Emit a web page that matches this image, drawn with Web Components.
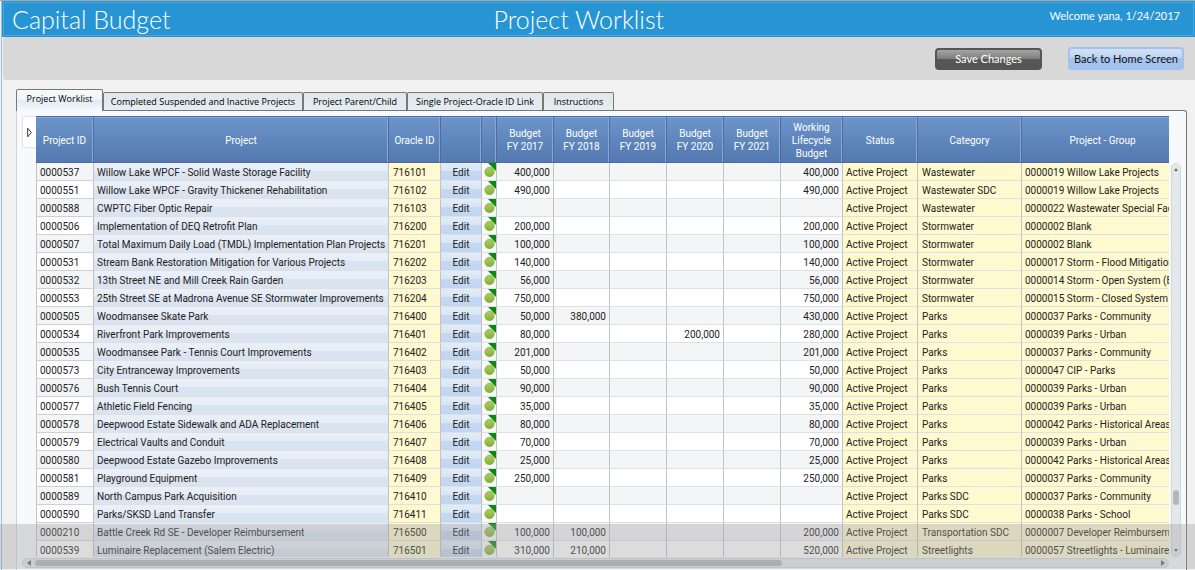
<!DOCTYPE html>
<html lang="en">
<head>
<meta charset="utf-8">
<title>Capital Budget - Project Worklist</title>
<style>
  body {
    margin: 0;
    background: #f1f1f1;
    font-family: Roboto, "Open Sans", sans-serif;
    font-size: 10px;
    color: #222;
  }
</style>
</head>
<body>
<budget-application>
  <page-header slot="header">
    <span slot="product">Capital Budget</span>
    <span slot="title">Project Worklist</span>
    <span slot="welcome">Welcome yana, 1/24/2017</span>
  </page-header>
  <page-toolbar slot="toolbar">
    <glossy-button variant="dark">Save Changes</glossy-button>
    <glossy-button>Back to Home Screen</glossy-button>
  </page-toolbar>
  <tab-strip slot="tabs"></tab-strip>
  <project-grid></project-grid>
</budget-application>

<script>
/**
 * The page frame: header, toolbar and the tabbed panel.
 */
const applicationTemplate = document.createElement('template')
applicationTemplate.innerHTML = `
  <style>
    :host {
      display: flex;
      flex-direction: column;
      box-sizing: border-box;
      height: 100vh;
      overflow: hidden;
      position: relative;
      border-top: 1px solid #a8a8a8;
    }

    .frame {
      flex: 1;
      min-height: 0;
      display: flex;
      flex-direction: column;
      margin-left: 1px;
      border-left: 1px solid #9dbde8;
    }

    .content {
      flex: 1;
      min-height: 0;
      display: flex;
      flex-direction: column;
      padding: 9px 8px 0 14px;
    }

    .panel {
      flex: 1;
      min-height: 0;
      display: flex;
      box-sizing: border-box;
      padding: 5px 5px 0;
      background: #f6fafd;
      border: solid #777;
      border-width: 1px 1px 0 1px;
      border-left-color: #d0d3d6;
      border-top-right-radius: 3px;
    }

    /* Translucent strip over the bottom of the page */
    .shade {
      position: absolute;
      left: 0;
      right: 0;
      bottom: 1px;
      height: 45px;
      background: rgba(158, 158, 158, 0.36);
      pointer-events: none;
    }
  </style>
  <div class="frame">
    <slot name="header"></slot>
    <slot name="toolbar"></slot>
    <div class="content">
      <slot name="tabs"></slot>
      <div class="panel"><slot></slot></div>
    </div>
  </div>
  <div class="shade"></div>
`
customElements.define('budget-application',
  /**
   * Represents a budget-application element.
   */
  class extends HTMLElement {
    constructor () {
      super()
      this.attachShadow({ mode: 'open' }).appendChild(applicationTemplate.content.cloneNode(true))
    }
  }
)

const headerTemplate = document.createElement('template')
headerTemplate.innerHTML = `
  <style>
    :host {
      display: block;
      padding: 1px;
      background: #2794d4;
      color: #fff;
      font-family: Lato, "Open Sans", sans-serif;
    }

    header {
      display: grid;
      grid-template-columns: 14fr auto 15fr;
      align-items: center;
      box-sizing: border-box;
      height: 34px;
      padding: 0 13px 0 8px;
      border: 1px solid #4ba6dc;
    }

    h1, h2 {
      margin: 0;
      font-size: 25px;
      line-height: 30px;
      font-weight: 300;
      white-space: nowrap;
    }

    p {
      margin: 0 0 6px;
      font-size: 11px;
      line-height: 14px;
      text-align: right;
    }
  </style>
  <header>
    <h1><slot name="product"></slot></h1>
    <h2><slot name="title"></slot></h2>
    <p><slot name="welcome"></slot></p>
  </header>
`
customElements.define('page-header',
  /**
   * Represents a page-header element.
   */
  class extends HTMLElement {
    constructor () {
      super()
      this.attachShadow({ mode: 'open' }).appendChild(headerTemplate.content.cloneNode(true))
    }
  }
)

const toolbarTemplate = document.createElement('template')
toolbarTemplate.innerHTML = `
  <style>
    :host {
      display: flex;
      justify-content: flex-end;
      align-items: center;
      gap: 26px;
      height: 43px;
      margin-left: 1px;
      padding-right: 11px;
      background: #d8d8d8;
      border-radius: 3px 0 0 3px;
    }
  </style>
  <slot></slot>
`
customElements.define('page-toolbar',
  /**
   * Represents a page-toolbar element.
   */
  class extends HTMLElement {
    constructor () {
      super()
      this.attachShadow({ mode: 'open' }).appendChild(toolbarTemplate.content.cloneNode(true))
    }
  }
)

const buttonTemplate = document.createElement('template')
buttonTemplate.innerHTML = `
  <style>
    :host {
      display: block;
    }

    button {
      display: block;
      width: 116px;
      height: 23px;
      padding: 0;
      border: 2px solid #a3c1ee;
      border-radius: 4px;
      background: linear-gradient(#d3e1f7, #bfd3f3 45%, #a6c4ef 50%, #a3c1ee);
      color: #111;
      font: 11px/16px Lato, "Open Sans", sans-serif;
      white-space: nowrap;
    }

    :host([variant="dark"]) button {
      width: 107px;
      height: 22px;
      padding-top: 1px;
      border: 2px solid #555;
      background: linear-gradient(#a5a5a5, #7e7e7e 48%, #585858 50%, #545454);
      color: #fff;
    }
  </style>
  <button type="button"><slot></slot></button>
`
customElements.define('glossy-button',
  /**
   * Represents a glossy-button element.
   */
  class extends HTMLElement {
    constructor () {
      super()
      this.attachShadow({ mode: 'open' }).appendChild(buttonTemplate.content.cloneNode(true))
    }
  }
)

const tabTemplate = document.createElement('template')
tabTemplate.innerHTML = `
  <style>
    :host {
      display: flex;
      align-items: flex-end;
      height: 21px;
      font-family: "Open Sans", "Noto Sans", sans-serif;
      font-size: 9px;
    }

    button {
      box-sizing: border-box;
      height: 18px;
      padding: 0;
      border: 1px solid #777;
      border-bottom: 0;
      border-radius: 2px 2px 0 0;
      background: linear-gradient(#dfe7ec, #e4edf0);
      color: #000;
      font: inherit;
      line-height: 16px;
      white-space: nowrap;
    }

    /* The open tab covers the top line of the panel */
    button[aria-selected="true"] {
      position: relative;
      height: 22px;
      margin-bottom: -1px;
      padding-bottom: 4px;
      background: linear-gradient(#f5f9fb, #eef5f9 48%, #dfebf1 50%, #f6fafd);
    }
  </style>
`
customElements.define('tab-strip',
  /**
   * Represents a tab-strip element.
   */
  class extends HTMLElement {
    #tabs = [
      ['Project Worklist', 87],
      ['Completed Suspended and Inactive Projects', 200],
      ['Project Parent/Child', 104],
      ['Single Project-Oracle ID Link', 136],
      ['Instructions', 71]
    ]

    constructor () {
      super()
      this.attachShadow({ mode: 'open' }).appendChild(tabTemplate.content.cloneNode(true))
      this.setAttribute('role', 'tablist')

      this.#tabs.forEach(([label, width], index) => {
        const button = document.createElement('button')
        button.type = 'button'
        button.setAttribute('role', 'tab')
        button.setAttribute('aria-selected', index === 0)
        button.style.width = `${width}px`
        button.textContent = label
        this.shadowRoot.appendChild(button)
      })
    }
  }
)

const scrollTemplate = document.createElement('template')
scrollTemplate.innerHTML = `
  <style>
    :host {
      display: flex;
      flex-direction: column;
      align-items: center;
      box-sizing: border-box;
      width: 10px;
      border: 1px solid #d3d8db;
      border-radius: 5px;
      background: #e4e8ea;
    }

    :host([horizontal]) {
      flex-direction: row;
      width: auto;
      height: 10px;
    }

    svg {
      flex: none;
      width: 8px;
      height: 12px;
      fill: #666;
    }

    :host([horizontal]) svg {
      width: 12px;
      height: 8px;
    }

    .before { flex: var(--before, 0); }
    .after { flex: var(--after, 1); }

    .thumb {
      flex: var(--thumb, 0 0 15px);
      width: 6px;
      border-radius: 3px;
      background: #b4b7b9;
    }

    :host([horizontal]) .thumb {
      width: auto;
      height: 6px;
    }
  </style>
  <svg viewBox="0 0 8 12"><path class="start"/></svg>
  <div class="before"></div>
  <div class="thumb"></div>
  <div class="after"></div>
  <svg viewBox="0 0 8 12"><path class="end"/></svg>
`
customElements.define('scroll-track',
  /**
   * Represents a scroll-track element.
   */
  class extends HTMLElement {
    constructor () {
      super()
      this.attachShadow({ mode: 'open' }).appendChild(scrollTemplate.content.cloneNode(true))

      const horizontal = this.hasAttribute('horizontal')
      this.shadowRoot.querySelector('.start').setAttribute('d', horizontal ? 'M8 1v6L4 4z' : 'M2 7h4L4 4z')
      this.shadowRoot.querySelector('.end').setAttribute('d', horizontal ? 'M5 1v6l4-3z' : 'M2 5h4L4 8z')
      if (horizontal) {
        this.shadowRoot.querySelectorAll('svg').forEach(svg => svg.setAttribute('viewBox', '0 0 12 8'))
      }
    }
  }
)

// id, project, oracle id, FY 2017, FY 2018, FY 2020, lifecycle, category, group
const projects = [
  ['0000537', 'Willow Lake WPCF - Solid Waste Storage Facility', '716101', '400,000', '', '', '400,000', 'Wastewater', '0000019 Willow Lake Projects'],
  ['0000551', 'Willow Lake WPCF - Gravity Thickener Rehabilitation', '716102', '490,000', '', '', '490,000', 'Wastewater SDC', '0000019 Willow Lake Projects'],
  ['0000588', 'CWPTC Fiber Optic Repair', '716103', '', '', '', '', 'Wastewater', '0000022 Wastewater Special Faci'],
  ['0000506', 'Implementation of DEQ Retrofit Plan', '716200', '200,000', '', '', '200,000', 'Stormwater', '0000002 Blank'],
  ['0000507', 'Total Maximum Daily Load (TMDL) Implementation Plan Projects', '716201', '100,000', '', '', '100,000', 'Stormwater', '0000002 Blank'],
  ['0000531', 'Stream Bank Restoration Mitigation for Various Projects', '716202', '140,000', '', '', '140,000', 'Stormwater', '0000017 Storm - Flood Mitigation'],
  ['0000532', '13th Street NE and Mill Creek Rain Garden', '716203', '56,000', '', '', '56,000', 'Stormwater', '0000014 Storm - Open System (B'],
  ['0000553', '25th Street SE at Madrona Avenue SE Stormwater Improvements', '716204', '750,000', '', '', '750,000', 'Stormwater', '0000015 Storm - Closed System ('],
  ['0000505', 'Woodmansee Skate Park', '716400', '50,000', '380,000', '', '430,000', 'Parks', '0000037 Parks - Community'],
  ['0000534', 'Riverfront Park Improvements', '716401', '80,000', '', '200,000', '280,000', 'Parks', '0000039 Parks - Urban'],
  ['0000535', 'Woodmansee Park - Tennis Court Improvements', '716402', '201,000', '', '', '201,000', 'Parks', '0000037 Parks - Community'],
  ['0000573', 'City Entranceway Improvements', '716403', '50,000', '', '', '50,000', 'Parks', '0000047 CIP - Parks'],
  ['0000576', 'Bush Tennis Court', '716404', '90,000', '', '', '90,000', 'Parks', '0000039 Parks - Urban'],
  ['0000577', 'Athletic Field Fencing', '716405', '35,000', '', '', '35,000', 'Parks', '0000039 Parks - Urban'],
  ['0000578', 'Deepwood Estate Sidewalk and ADA Replacement', '716406', '80,000', '', '', '80,000', 'Parks', '0000042 Parks - Historical Areas ('],
  ['0000579', 'Electrical Vaults and Conduit', '716407', '70,000', '', '', '70,000', 'Parks', '0000039 Parks - Urban'],
  ['0000580', 'Deepwood Estate Gazebo Improvements', '716408', '25,000', '', '', '25,000', 'Parks', '0000042 Parks - Historical Areas ('],
  ['0000581', 'Playground Equipment', '716409', '250,000', '', '', '250,000', 'Parks', '0000037 Parks - Community'],
  ['0000589', 'North Campus Park Acquisition', '716410', '', '', '', '', 'Parks SDC', '0000037 Parks - Community'],
  ['0000590', 'Parks/SKSD Land Transfer', '716411', '', '', '', '', 'Parks SDC', '0000038 Parks - School'],
  ['0000210', 'Battle Creek Rd SE - Developer Reimbursement', '716500', '100,000', '100,000', '', '200,000', 'Transportation SDC', '0000007 Developer Reimbursem.'],
  ['0000539', 'Luminaire Replacement (Salem Electric)', '716501', '310,000', '210,000', '', '520,000', 'Streetlights', '0000057 Streetlights - Luminaire.']
]

const gridTemplate = document.createElement('template')
gridTemplate.innerHTML = `
  <style>
    :host {
      flex: 1;
      min-width: 0;
      display: grid;
      grid-template-columns: 14px minmax(0, 1fr) 10px;
      grid-template-rows: minmax(0, 1fr) 10px;
      padding-bottom: 2px;
    }

    .expander {
      width: 14px;
      height: 32px;
      box-sizing: border-box;
      padding: 0;
      border: 1px solid #e2e4e6;
      border-right: 0;
      background: #fff;
    }

    .expander svg {
      display: block;
      margin: auto;
    }

    .viewport {
      overflow: hidden;
      margin-right: 2px;
      margin-bottom: 1px;
    }

    scroll-track.vertical {
      margin: 47px 0 1px;
      --before: 8;
    }

    scroll-track.horizontal {
      grid-column: 1 / 3;
      margin-right: 2px;
      --thumb: 2;
    }

    /* The last column runs on past the right edge of the viewport */
    table {
      table-layout: fixed;
      width: calc(100% + 14px);
      border-collapse: separate;
      border-spacing: 0;
    }

    th, td {
      box-sizing: border-box;
      padding: 0 4px;
      white-space: nowrap;
      overflow: hidden;
      border-right: 1px solid #c2c3c6;
    }

    th {
      height: 47px;
      padding: 1px 0 0;
      border: solid #54699f;
      border-width: 1px 1px 1px 0;
      background: linear-gradient(#6c95ca, #5379b0);
      box-shadow: inset -1px 1px #86a8d8;
      color: #fff;
      font-weight: normal;
      line-height: 13px;
      white-space: pre-line;
    }

    th:last-child, td:last-child {
      border-right: 0;
    }

    td {
      height: 18px;
      padding-top: 2px;
      line-height: 15px;
      border-bottom: 1px solid #dfe0e4;
      background: #fff;
    }

    tr:nth-child(odd) td {
      background: #f4f5f7;
    }

    td:first-child {
      padding-left: 3px;
      border-left: 1px solid #c2c3c6;
      border-bottom-color: #cfd0d3;
    }

    tr td.project {
      padding-left: 3px;
      background: linear-gradient(#ebf0f8, #e6edf6 45%, #dae4f1 50%, #dae3f0);
    }

    tr td.yellow {
      background: #fff9cf;
    }

    td.number {
      padding-right: 3px;
      text-align: right;
    }

    td.status {
      padding: 2px 0 0 3px;
    }

    td.group {
      padding-left: 3px;
    }

    td.action, td.lights {
      padding: 0;
    }

    td.action button {
      display: block;
      width: 100%;
      height: 17px;
      padding: 2px 0 0;
      border: 0;
      background: linear-gradient(#e3ecf8, #d8e5f5 45%, #c5d8f1 50%, #c3d6f0);
      color: #222;
      font: inherit;
    }

    tr td.lights {
      background: #f8f9fa;
    }

    td.lights svg {
      display: block;
    }
  </style>
  <button class="expander" type="button" aria-label="Show filters">
    <svg width="11" height="11" viewBox="0 0 9 9"><path d="M3 1v7l3-3.500z" fill="#fff" stroke="#333" stroke-width=".8"/></svg>
  </button>
  <div class="viewport">
    <table>
      <colgroup></colgroup>
      <thead><tr></tr></thead>
      <tbody></tbody>
    </table>
  </div>
  <scroll-track class="vertical"></scroll-track>
  <scroll-track class="horizontal" horizontal></scroll-track>
`
customElements.define('project-grid',
  /**
   * Represents a project-grid element.
   */
  class extends HTMLElement {
    #columns = [
      ['Project ID', 58],
      ['Project', 295],
      ['Oracle ID', 52],
      ['', 41],
      ['', 15],
      ['Budget\nFY 2017', 57],
      ['Budget\nFY 2018', 56],
      ['Budget\nFY 2019', 57],
      ['Budget\nFY 2020', 57],
      ['Budget\nFY 2021', 57],
      ['Working\nLifecycle\nBudget', 62],
      ['Status', 75],
      ['Category', 104],
      ['Project - Group', 0]
    ]

    constructor () {
      super()
      this.attachShadow({ mode: 'open' }).appendChild(gridTemplate.content.cloneNode(true))
      this.#renderHead()
      this.#renderBody()
    }

    /**
     * Adds the column widths and headings. The last column takes the rest.
     */
    #renderHead () {
      this.shadowRoot.querySelector('colgroup').innerHTML =
        this.#columns.map(([, width]) => width ? `<col style="width: ${width}px">` : '<col>').join('')
      this.shadowRoot.querySelector('thead tr').innerHTML =
        this.#columns.map(([label]) => `<th>${label}</th>`).join('')
    }

    /**
     * Adds one row for each project.
     */
    #renderBody () {
      this.shadowRoot.querySelector('tbody').innerHTML = projects.map(
        ([id, project, oracle, fy17, fy18, fy20, total, category, group]) => `
        <tr>
          <td>${id}</td>
          <td class="project">${project}</td>
          <td class="yellow">${oracle}</td>
          <td class="action"><button type="button">Edit</button></td>
          <td class="lights">
            <svg width="14" height="17" viewBox="0 0 14 17">
              <defs><linearGradient id="g" x2="0" y2="1"><stop stop-color="#abd05a"/><stop offset="1" stop-color="#86b035"/></linearGradient></defs>
              <path d="M6 0h8v8z" fill="#0a8a0a"/>
              <circle cx="7.500" cy="9" r="4.700" fill="url(#g)" stroke="#7c9c3c" stroke-width=".6"/>
            </svg>
          </td>
          <td class="number">${fy17}</td>
          <td class="number">${fy18}</td>
          <td class="number"></td>
          <td class="number">${fy20}</td>
          <td class="number"></td>
          <td class="number">${total}</td>
          <td class="yellow status">Active Project</td>
          <td class="yellow">${category}</td>
          <td class="yellow group">${group}</td>
        </tr>`).join('')
    }
  }
)
</script>
</body>
</html>
